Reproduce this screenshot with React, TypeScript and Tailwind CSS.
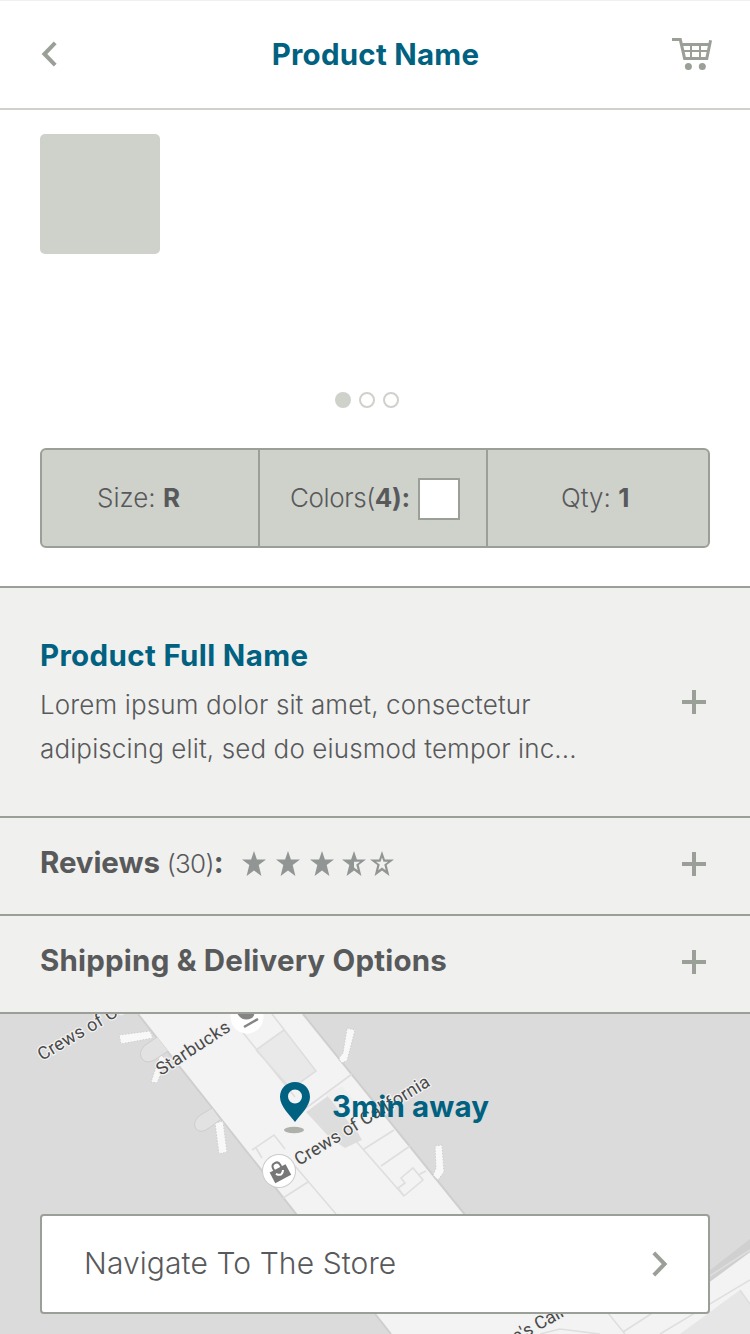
import React from "react";

function Plus() {
  return (
    <svg width="24" height="24" viewBox="0 0 24 24" fill="#9aa097">
      <path d="M10 0h4v10h10v4H14v10h-4V14H0v-4h10z" />
    </svg>
  );
}

function Chevron({ flip = false }: { flip?: boolean }) {
  return (
    <svg width="16" height="26" viewBox="0 0 16 26" fill="none" stroke="#9aa097" strokeWidth="4" className={flip ? "rotate-180" : ""}>
      <path d="M1.8 1.8L12.6 13L1.8 24.2" />
    </svg>
  );
}

function Cart() {
  return (
    <svg width="40" height="32" viewBox="0 0 40 32" fill="none" stroke="#9aa097" className="block">
      <path d="M0 1.6H8.3L12.6 20.4H34.8L38.6 2.2M9 6.6H37.5" strokeWidth="3" />
      <path d="M10.4 13H36.5M19 6V20M28 6V20" strokeWidth="2" />
      <circle cx="16.4" cy="28.4" r="3.5" fill="#9aa097" stroke="none" />
      <circle cx="30.3" cy="28.4" r="3.5" fill="#9aa097" stroke="none" />
    </svg>
  );
}

const STAR = "M12 0L14.9 8.6H24L16.7 14.1L19.4 25L12 19.4L4.6 25L7.3 14.1L0 8.6H9.1Z";
const STAR_HOLE = "M12 6.4L13.5 10.8H18L14.3 13.6L15.7 19.2L12 16.4L8.3 19.2L9.7 13.6L6 10.8H10.5Z";
const HALF_HOLE = "M12 10.8H18L14.3 13.6L15.7 19.2L12 16.4Z";

function Star({ kind = "full" }: { kind?: "full" | "half" | "empty" }) {
  return (
    <svg width="24" height="26" viewBox="0 0 24 26" fill="#919594">
      <path fillRule="evenodd" d={kind === "full" ? STAR : kind === "half" ? STAR + HALF_HOLE : STAR + STAR_HOLE} />
    </svg>
  );
}

function TerminalMap() {
  const label = {
    fontFamily: "Roboto",
    fontSize: 18,
    fill: "#4a4a4a",
    stroke: "#f2f2f2",
    strokeWidth: 2.5,
    paintOrder: "stroke",
  } as const;
  return (
    <svg width="750" height="320" viewBox="0 1014 750 320" className="absolute inset-0 block">
      <rect y="1014" width="750" height="320" fill="#dbdbdb" />
      <path d="M138 1014H303L465 1214L560 1334H391Z" fill="#f3f3f3" />
      <path d="M700 1278L750 1239V1334H700Z" fill="#d0d0d0" />
      <path d="M391 1334L375 1314L440 1230L690 1295L750 1250V1334Z" fill="#f3f3f3" />
      <path d="M138 1014L391 1334M303 1014L466 1216M708 1282L750 1251" fill="none" stroke="#cfcfcf" strokeWidth="2" />
      <path d="M680 1334L740 1290L750 1303V1334Z" fill="#e6e6e6" />
      <path d="M608 1313L625 1334M623 1332L750 1250M660 1334L750 1280M740 1290L750 1304M540 1334L560 1329L600 1334" fill="none" stroke="#dedede" strokeWidth="1.5" />

      <g fill="#f8f8f8" stroke="#cdcdcd" strokeWidth="1" strokeDasharray="1.5 1.5">
        <path d="M119 1035L150 1031L153 1038L121 1044Z" />
        <path d="M160 1055L167 1059L157 1083L151 1082Z" />
        <path d="M215 1123L223 1121L227 1152L219 1154Z" />
        <path d="M347 1028L355 1030L347 1061L341 1063L339 1058L343 1053Z" />
        <path d="M435 1146L442 1145L444 1172L438 1180L433 1175L436 1168Z" />
      </g>
      <g fill="#e2e2e2" stroke="#cecece" strokeWidth="1">
        <path d="M157 1037L144 1046Q138 1053 142 1059Q147 1065 156 1059L168 1051" />
        <path d="M212 1108L199 1116Q192 1123 196 1129Q201 1134 209 1128L220 1120" />
      </g>

      <path d="M256 1050L284 1030L316 1071L291 1089Z" fill="#e9e9e9" />
      <path d="M306 1112L328 1096L345 1110L362 1140L345 1148L330 1138Z" fill="#dddddd" />
      <path d="M326 1094L342 1086L365 1114L350 1124Z" fill="#efefef" />
      <g fill="none" stroke="#dedede" strokeWidth="1.6">
        <path d="M240 1029L295 1097M256 1050L284 1030M272 1014L316 1071L291 1089L256 1050" />
        <path d="M302 1111L352 1074M348 1132L404 1196M364 1149L394 1130M381 1166L410 1146" />
        <path d="M252 1150L274 1135L285 1149M256 1148L262 1158M283 1198L308 1182M295 1166L336 1214" />
        <path d="M404 1196L398 1188L405 1183L401 1178L413 1168L423 1180L404 1196M418 1175L426 1171" />
      </g>

      <g transform="translate(247 1017)">
        <circle r="16.500" fill="#fff" />
        <path d="M-11 -5L-7 -8H6Q9 -2 5 1Q-3 5 -8 -1Z" fill="#858585" />
        <path d="M-3 10L11 2" stroke="#858585" strokeWidth="2.5" />
      </g>
      <text transform="translate(42 1061) rotate(-30.500)" textLength="104" {...label}>Crews of Cal</text>
      <text transform="translate(161 1076) rotate(-33)" textLength="84" {...label}>Starbucks</text>
      <text transform="translate(299 1166) rotate(-31.5)" textLength="155" {...label}>Crews of California</text>
      <text transform="translate(516 1343) rotate(-29)" {...label}>e's Cali</text>

      <g transform="translate(279 1171)">
        <circle r="17" fill="#ccc" />
        <circle r="16" fill="#fff" />
        <g transform="rotate(-28)">
          <path d="M-9 -3H9V9H-9Z" fill="#777" />
          <path d="M-4 -2V-5Q-4 -9 0 -9Q4 -9 4 -5V-2" fill="none" stroke="#777" strokeWidth="2" />
          <path d="M-4 1Q0 7 4 1" fill="none" stroke="#fff" strokeWidth="2" />
        </g>
      </g>

      <ellipse cx="294" cy="1130" rx="10" ry="3.3" fill="#adb1a9" />
      <path fillRule="evenodd" d="M295 1082C286.500 1082 280 1088.500 280 1097C280 1106 289 1114 295 1122C301 1114 310 1106 310 1097C310 1088.500 303.500 1082 295 1082ZM295 1089.500A7 7 0 1 1 295 1103.500A7 7 0 1 1 295 1089.500Z" fill="#006181" />
    </svg>
  );
}

export default function App() {
  return (
    <div className="flex h-[1334px] w-[750px] flex-col overflow-hidden whitespace-nowrap bg-white font-['Inter',sans-serif] text-[#58595b]">
      <header className="flex h-[110px] items-center justify-between border-t border-b-2 border-t-[#f0f0ef] border-b-[#cfd1cb] pr-[38px] pb-[2px] pl-[41px]">
        <div className="flex w-10"><Chevron flip /></div>
        <h1 className="pt-[2px] pr-[2px] text-[29.5px] font-bold tracking-[0.25px] text-[#006181]">Product Name</h1>
        <Cart />
      </header>

      <section className="flex h-[476px] flex-col px-10 pt-6">
        <div className="size-[120px] rounded-[5px] bg-[#cfd1cb]" />
        <div className="mt-[138px] ml-[295px] flex gap-2">
          <span className="size-4 rounded-full bg-[#cfd1cb]" />
          <span className="size-4 rounded-full border-2 border-[#cfd1cb]" />
          <span className="size-4 rounded-full border-2 border-[#cfd1cb]" />
        </div>
        <div className="mt-10 flex h-[100px] rounded-md border-2 border-[#9aa097] bg-[#cfd1cb] text-[26px] leading-[96px] font-light">
          <div className="w-[218px] border-r-2 border-[#9aa097] pl-[55px]">Size: <b className="font-bold">R</b></div>
          <div className="flex w-[228px] items-center border-r-2 border-[#9aa097] pl-[30px]">
            <span className="w-[128px] tracking-[-0.4px]">Colors(<b className="font-bold">4):</b></span>
            <span className="mt-[2px] size-[42px] border-2 border-[#9aa097] bg-white" />
          </div>
          <div className="pl-[73px]">Qty: <b className="font-bold">1</b></div>
        </div>
      </section>

      <section className="flex h-[230px] items-center justify-between border-t-2 border-[#9aa097] bg-[#f0f0ee] pr-11 pl-10">
        <div className="pt-[2px]">
          <h2 className="-mt-[2px] text-[29.5px] leading-[44px] font-bold tracking-[0.35px] text-[#006181]">Product Full Name</h2>
          <p className="mt-[6px] text-[26px] leading-[44px] font-light tracking-[0.12px]">
            Lorem ipsum dolor sit amet, consectetur<br />adipiscing elit, sed do eiusmod tempor inc...
          </p>
        </div>
        <Plus />
      </section>

      <section className="flex h-[98px] items-center justify-between border-t-2 border-[#9aa097] bg-[#f0f0ee] pr-11 pb-1 pl-10">
        <div className="flex items-center">
          <h2 className="w-[202px] pb-[3px] text-[29.5px] font-bold tracking-[-0.1px]">Reviews <span className="text-[26px] font-light tracking-[-0.7px]">(30)</span>:</h2>
          <div className="flex gap-[10px]">
            <Star /><Star /><Star />
            <div className="-ml-[2px] flex gap-1"><Star kind="half" /><Star kind="empty" /></div>
          </div>
        </div>
        <Plus />
      </section>

      <section className="flex h-[98px] items-center justify-between border-t-2 border-[#9aa097] bg-[#f0f0ee] pr-11 pb-1 pl-10">
        <h2 className="pb-[3px] text-[29.5px] font-bold tracking-[0.2px]">Shipping &amp; Delivery Options</h2>
        <Plus />
      </section>

      <section className="relative h-[322px] border-t-2 border-[#9aa097]">
        <TerminalMap />
        <div className="relative flex h-full flex-col justify-between px-10 pb-5">
          <p className="pt-[70px] pl-[292px] text-[29.5px] leading-[44px] font-bold tracking-[0.15px] text-[#006181]">3min away</p>
          <button className="flex h-[100px] items-center justify-between rounded border-2 border-[#9aa097] bg-white pr-[40px] pl-[42px] text-[30px] font-light tracking-[0.1px]">
            <span className="pb-[2px]">Navigate To The Store</span>
            <Chevron />
          </button>
        </div>
      </section>
    </div>
  );
}
